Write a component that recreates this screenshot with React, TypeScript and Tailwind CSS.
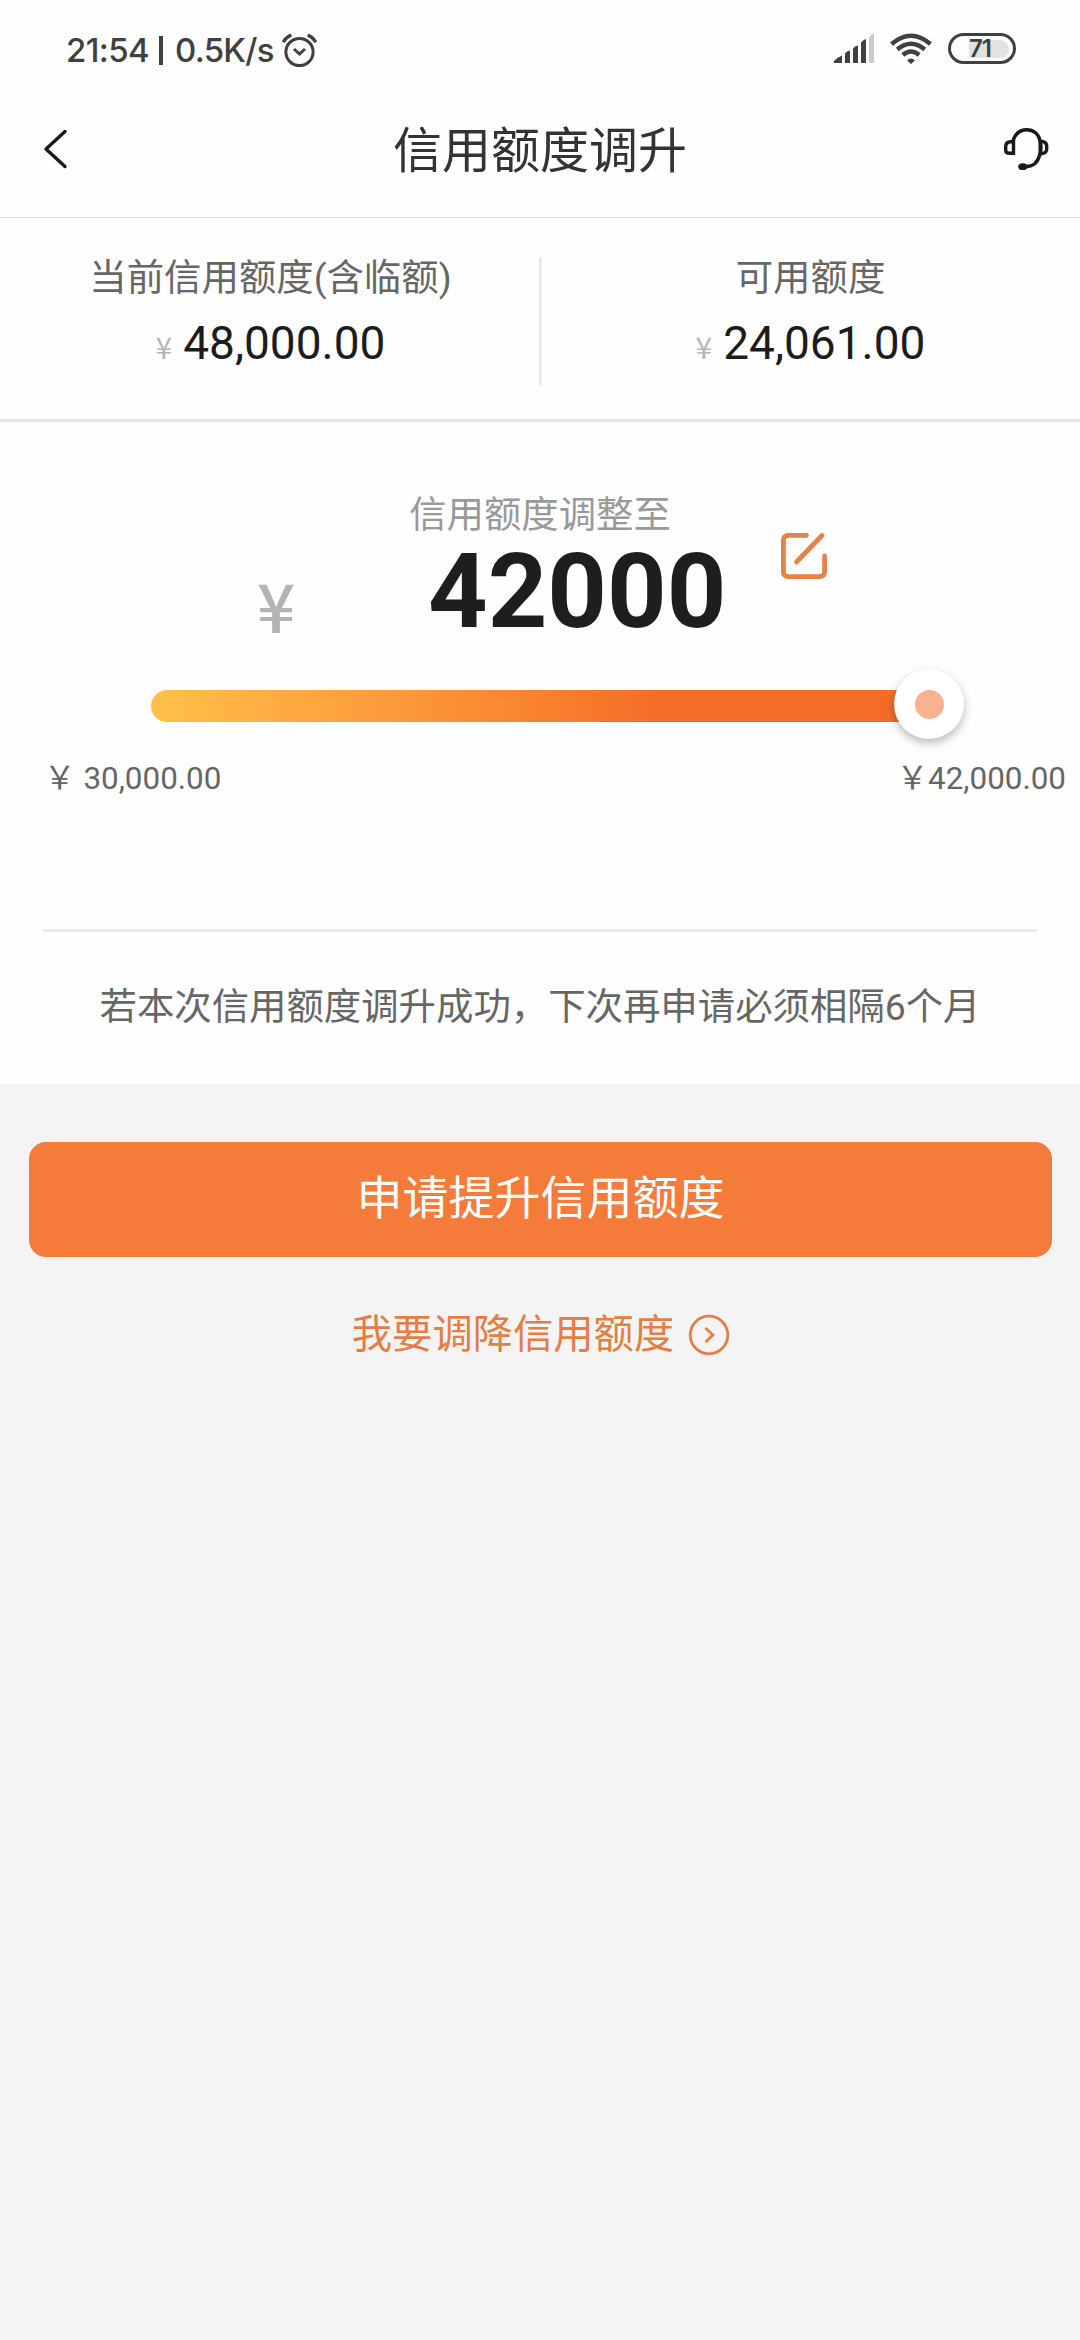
interface AmountProps {
  label: string;
  value: string;
}

const summary: AmountProps[] = [
  { label: '当前信用额度(含临额)', value: '48,000.00' },
  { label: '可用额度', value: '24,061.00' },
];

function Yen({ className }: { className: string }) {
  return <span className={`font-['Noto_Sans_CJK_SC',sans-serif] ${className}`}>¥</span>;
}

function StatusBar() {
  return (
    <div className="flex h-[100px] items-start justify-between pl-[66px] pr-[64px] font-['Inter',sans-serif] font-medium text-[#404040]">
      <div className="mt-[30px] flex h-10 items-center whitespace-pre text-[33px] leading-10">
        <span className="w-[93px] tracking-[-0.6px]">21:54</span>
        <span className="h-[29px] w-1 bg-[#404040]" />
        <span className="ml-[12px] w-[107px] tracking-[-0.7px]">0.5K/s</span>
        <svg className="h-[35px] w-[35px]" viewBox="0 0 35 35" fill="none" stroke="#404040" strokeWidth="3">
          <circle cx="17.5" cy="19" r="13.6" />
          <path d="M12 16l5.500 5 5.500-5" />
          <path d="M1.200 9.200Q4 4.200 9.300 2.200M33.800 9.200Q31 4.200 25.700 2.200" strokeWidth="3.400" />
        </svg>
      </div>
      <div className="mt-[33px] flex items-center">
        <svg className="h-[31px] w-[40px]" viewBox="0 0 40 31" fill="#404040">
          <path d="M0 30v-2q4-4 8-5.500V30zM11 20.500l2-2 3-1V30h-5zM19 15.500l2-2 3-1V30h-5zM27 9.500l2-2 3-1.500V30h-5z" />
          <path d="M35 4l5-4v30h-5z" fill="#cbcbcb" />
        </svg>
        <svg className="ml-4 h-[31px] w-[42px]" viewBox="0 0 42 31" fill="none" stroke="#404040" strokeWidth="4.400">
          <path d="M1.500 11Q21-5.500 40.500 11M7.300 16.500Q21 5 34.700 16.500M12.800 22Q21 15 29.200 22" />
          <path d="M17 27.500q4-4 8 0l-4 3.500z" fill="#404040" stroke="none" />
        </svg>
        <div className="ml-4 flex h-[31px] w-[68px] items-center rounded-full border-[3.500px] border-[#404040] pl-[18px]">
          <div className="flex h-[18px] w-[40px] items-center rounded-r-full bg-[#e2e2e2] text-[24px] font-semibold leading-none tracking-[-1px]">
            71
          </div>
        </div>
      </div>
    </div>
  );
}

function Header() {
  return (
    <header className="flex h-[118px] items-start justify-between border-b border-[#e2e2e2] pl-[42px] pr-[30px]">
      <svg className="mt-[28px] h-[42px] w-[48px]" viewBox="0 0 48 42" fill="none" stroke="#1a1a1a" strokeWidth="3.400" strokeLinecap="round" strokeLinejoin="round">
        <path d="M23 3.500L4 21l19 17.500" />
      </svg>
      <h1 className="mr-[12px] mt-[22px] text-[49px] leading-[60px] text-[#333]">信用额度调升</h1>
      <svg className="mt-[26px] h-[46px] w-[48px]" viewBox="0 0 48 46" fill="none" stroke="#1a1a1a" strokeWidth="3.400">
        <path d="M11.500 15.800H8.500Q3.700 15.800 3.700 21v3.500Q3.700 27.300 8 27.300h3.500z" />
        <path d="M10.800 15.500C13 8 18 3.700 24.700 3.700S37 8 38.200 15.500c2 7-.2 17-5.200 22-2.800 2.500-6.500 3.200-11 3.200" />
        <path d="M38.200 15.500h2q4.500.5 4.500 5v2.500q0 4-4.500 4.500h-2z" />
        <ellipse cx="20.800" cy="40.700" rx="4.600" ry="3.400" fill="#1a1a1a" stroke="none" />
      </svg>
    </header>
  );
}

function Amount({ label, value }: AmountProps) {
  return (
    <div className="flex flex-1 flex-col items-center pl-px pt-[35px]">
      <p className="text-[37.400px] leading-[50px] text-[#666]">{label}</p>
      <p className="mt-[11px] flex items-baseline leading-[58px]">
        <Yen className="mr-[11px] text-[30px] text-[#b5b5b5]" />
        <span className="text-[46px] text-[#1c1c1c]">{value}</span>
      </p>
    </div>
  );
}

function Slider() {
  return (
    <div className="ml-[151px] flex h-[70px] w-[813px] items-center">
      <div className="mt-1 h-8 w-[780px] rounded-l-full bg-linear-to-r from-[#ffc04a] via-[#f46d28] via-65% to-[#f46d28]" />
      <div className="-ml-[37px] flex h-[70px] w-[70px] shrink-0 items-center justify-center rounded-full bg-white shadow-[0_4px_10px_rgba(0,0,0,0.28)]">
        <div className="h-[29px] w-[29px] rounded-full bg-[#f9b28f]" />
      </div>
    </div>
  );
}

export default function App() {
  return (
    <div className="flex h-[2340px] w-[1080px] flex-col overflow-hidden bg-[#f4f4f4] font-['Roboto','Noto_Sans_CJK_SC',sans-serif]">
      <div className="h-[1084px] bg-[#fefefe]">
        <StatusBar />
        <Header />

        <section className="relative flex h-[204px] border-b-[3px] border-[#e3e3e3]">
          {summary.map((item) => (
            <Amount key={item.label} {...item} />
          ))}
          <div className="absolute left-[539px] top-[40px] h-[127px] w-[3px] bg-[#e8e8e8]" />
        </section>

        <section>
          <p className="pt-[68px] text-center text-[37.400px] leading-[50px] text-[#999]">信用额度调整至</p>
          <div className="flex h-[129px] items-start">
            <Yen className="ml-[257px] w-[171px] pt-[29px] text-[67px] font-medium leading-[70px] text-[#b3b3b3]" />
            <span className="-mt-px w-[351px] text-[104px] font-bold leading-[106px] text-[#1e1e1e]">42000</span>
            <svg className="-mt-[9px] h-[50px] w-[50px]" viewBox="0 0 50 50" fill="none" stroke="#e58149" strokeWidth="4.800" strokeLinecap="round">
              <path d="M27.500 4.400H9.500Q4.400 4.400 4.400 9.500v31q0 5.100 5.100 5.100h31q5.100 0 5.100-5.100V25" />
              <path d="M17.500 31L43 4.500" />
            </svg>
          </div>
          <Slider />
          <div className="mt-[16px] flex h-[48px] justify-between pl-[44px] pr-[14px] text-[31.400px] leading-[48px] text-[#666]">
            <p className="flex gap-2">
              <span>￥</span>
              <span>30,000.00</span>
            </p>
            <p className="flex">
              <span>￥</span>
              <span>42,000.00</span>
            </p>
          </div>
        </section>

        <section className="mx-[43px] mt-[126px] border-t-[3px] border-[#e8e8e8] pt-[50px] text-center">
          <p className="whitespace-nowrap text-[37.400px] leading-[50px] text-[#666]">
            若本次信用额度调升成功，下次再申请必须相隔6个月
          </p>
        </section>
      </div>

      <button className="mx-[29px] mt-[58px] h-[115px] w-[1023px] rounded-[17px] bg-[#f47b3a] pb-[3px] text-[46px] text-white">
        申请提升信用额度
      </button>
      <a className="mt-[51px] flex items-center justify-center gap-[14px] pl-[2px] text-[40.300px] leading-[54px] text-[#e37e45]">
        我要调降信用额度
        <svg className="h-[42px] w-[42px]" viewBox="0 0 42 42" fill="none" stroke="#e37e45" strokeWidth="2.800">
          <circle cx="21" cy="21" r="18.800" />
          <path d="M17.500 14l7.500 7-7.500 7" />
        </svg>
      </a>
    </div>
  );
}
